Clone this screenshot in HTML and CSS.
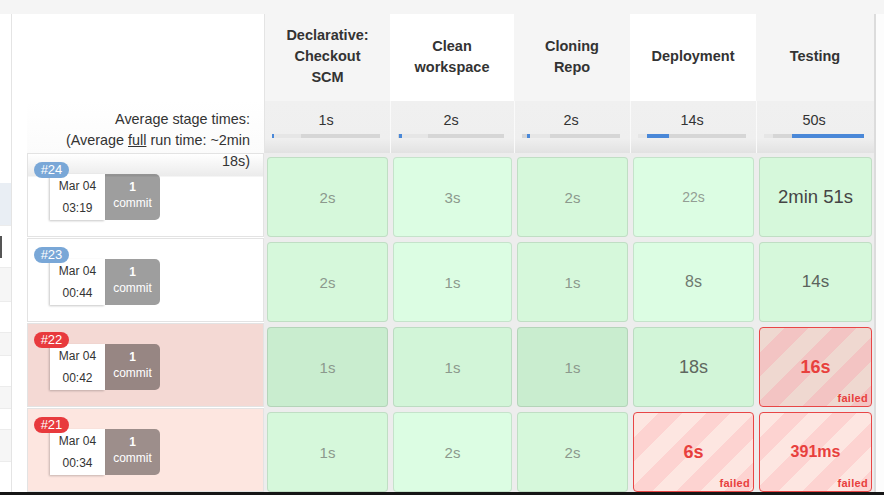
FILE: index.html
```html
<!DOCTYPE html>
<html>
<head>
<meta charset="utf-8">
<link rel="stylesheet" href="styles.css">
</head>
<body>
<div class="topbar"></div>
<div class="layout">
  <aside class="sidebar">
    <div class="side-item h169"></div>
    <div class="side-item h43 blue"></div>
    <div class="side-item h42"><div class="mark"></div></div>
    <div class="side-item h34 gray"></div>
    <div class="side-item h31"></div>
    <div class="side-item h23 gray"></div>
    <div class="side-item h31"></div>
    <div class="side-item h22 gray"></div>
    <div class="side-item h21"></div>
    <div class="side-item h32 gray"></div>
    <div class="side-item fill"></div>
  </aside>
  <main class="stage-view">
    <div class="grid">
      <div class="corner"></div>
      <div class="sh alt first">Declarative:<br>Checkout<br>SCM</div>
      <div class="sh">Clean<br>workspace</div>
      <div class="sh alt">Cloning<br>Repo</div>
      <div class="sh">Deployment</div>
      <div class="sh alt">Testing</div>

      <div class="avg-label">Average stage times:<br>(Average <u>full</u> run time: ~2min<br>18s)</div>
      <div class="avg first">1s<div class="bar"><span class="blue" style="width:2px"></span><span class="light" style="width:27px"></span></div></div>
      <div class="avg">2s<div class="bar"><span style="width:1px"></span><span class="blue" style="width:3px"></span><span class="light" style="width:26px"></span></div></div>
      <div class="avg">2s<div class="bar"><span style="width:5px"></span><span class="blue" style="width:3px"></span><span class="light" style="width:20px"></span></div></div>
      <div class="avg">14s<div class="bar"><span class="light" style="width:9px"></span><span class="blue" style="width:22px"></span></div></div>
      <div class="avg">50s<div class="bar"><span class="light" style="width:9px"></span><span style="width:19px"></span><span class="blue" style="width:72px"></span></div></div>

      <div class="build first-row">
        <span class="badge ok">#24</span>
        <div class="card"><div class="date">Mar 04<br>03:19</div><div class="commit"><b>1</b><br>commit</div></div>
      </div>
      <div class="col"><div class="cell g1 t-sm">2s</div></div>
      <div class="col"><div class="cell g2 t-sm">3s</div></div>
      <div class="col"><div class="cell g1 t-sm">2s</div></div>
      <div class="col"><div class="cell g2 t-xs">22s</div></div>
      <div class="col"><div class="cell g1 t-xl">2min 51s</div></div>

      <div class="build">
        <span class="badge ok">#23</span>
        <div class="card"><div class="date">Mar 04<br>00:44</div><div class="commit"><b>1</b><br>commit</div></div>
      </div>
      <div class="col"><div class="cell g1 t-sm">2s</div></div>
      <div class="col"><div class="cell g2 t-sm">1s</div></div>
      <div class="col"><div class="cell g1 t-sm">1s</div></div>
      <div class="col"><div class="cell g2 t-md">8s</div></div>
      <div class="col"><div class="cell g1 t-lg">14s</div></div>

      <div class="build fail-dark">
        <span class="badge bad">#22</span>
        <div class="card"><div class="date">Mar 04<br>00:42</div><div class="commit"><b>1</b><br>commit</div></div>
      </div>
      <div class="col"><div class="cell g3 t-sm">1s</div></div>
      <div class="col"><div class="cell g4 t-sm">1s</div></div>
      <div class="col"><div class="cell g3 t-sm">1s</div></div>
      <div class="col"><div class="cell g4 t-lg2">18s</div></div>
      <div class="col"><div class="cell failed dark">16s<span class="failed-tag">failed</span></div></div>

      <div class="build fail-light">
        <span class="badge bad">#21</span>
        <div class="card"><div class="date">Mar 04<br>00:34</div><div class="commit"><b>1</b><br>commit</div></div>
      </div>
      <div class="col"><div class="cell g1 t-sm">1s</div></div>
      <div class="col"><div class="cell g2 t-sm">2s</div></div>
      <div class="col"><div class="cell g1 t-sm">2s</div></div>
      <div class="col"><div class="cell failed light">6s<span class="failed-tag">failed</span></div></div>
      <div class="col"><div class="cell failed light small">391ms<span class="failed-tag">failed</span></div></div>
    </div>
  </main>
  <div class="edge"></div>
</div>
<div class="bottombar"></div>
</body>
</html>
```
FILE: styles.css
```css
* { box-sizing: border-box; }
html, body { margin: 0; padding: 0; }
body {
  width: 884px;
  height: 495px;
  overflow: hidden;
  background: #fff;
  color: #333;
  font-family: "Liberation Sans", Arial, sans-serif;
}
.topbar { height: 14px; background: #f5f5f5; }
.layout { display: flex; height: 478px; overflow: hidden; }
.bottombar { height: 3px; background: #161616; }

/* sidebar */
.sidebar {
  flex: none;
  width: 12px;
  border-right: 1px solid #e4e4e4;
  display: flex;
  flex-direction: column;
}
.side-item { flex: none; border-bottom: 1px solid #ececec; }
.side-item.blue { background: #e9eef4; }
.side-item.gray { background: #f6f6f6; }
.side-item.fill { flex: 1; border-bottom: 0; }
.h169 { height: 169px; border-bottom: 0; }
.h43 { height: 43px; }
.h42 { height: 42px; }
.h34 { height: 34px; }
.h31 { height: 31px; }
.h23 { height: 23px; }
.h22 { height: 22px; }
.h21 { height: 21px; }
.h32 { height: 32px; }
.mark { height: 22px; margin-top: 10px; border-left: 2px solid #555; }

/* stage view */
.stage-view { flex: none; padding-left: 15px; }
.grid {
  display: grid;
  grid-template-columns: 237px 126px 124px 116px 126px 118px;
  grid-template-rows: 87px 52px repeat(4, 85px);
}
.edge { flex: 1; border-left: 2px solid #dcdcdc; background: #fcfcfc; }

.sh {
  display: flex;
  align-items: center;
  justify-content: center;
  text-align: center;
  font-weight: 700;
  font-size: 14.5px;
  line-height: 21px;
  padding-bottom: 2px;
  color: #333;
  background: #fff;
}
.sh.alt { background: #f5f5f5; }
.sh.first { border-left: 1px solid #e4e4e4; }

.avg-label {
  position: relative;
  z-index: 1;
  text-align: right;
  padding: 8px 14px 0 0;
  font-size: 14.4px;
  line-height: 21px;
  color: #333;
  background: linear-gradient(#fff, #fbfbfb);
}
.avg-label u { text-decoration: underline; }

.avg {
  text-align: center;
  font-size: 14.4px;
  line-height: 21px;
  padding: 9px 10px 0 7px;
  color: #333;
  border-left: 1px solid #fafafa;
  background: linear-gradient(#f0f0f0 0, #efefef 72%, #e2e2e2 100%);
}
.avg.first { border-left: 1px solid #e4e4e4; }
.bar {
  display: flex;
  height: 4px;
  margin-top: 3px;
  background: #d6d6d6;
}
.bar span { display: block; height: 4px; flex: none; }
.bar .blue { background: #4a88d8; }
.bar .light { background: #e6e6e6; }

/* build label cells */
.build {
  height: 84px;
  border: 1px solid #e3e3e3;
  padding: 8px 0 0 6px;
  background: #fff;
}
.build.first-row { background: linear-gradient(#fff 0, #ebebeb 22px, #fff 23px); }
.build.fail-dark { background: #f4d9d4; }
.build.fail-light { background: #fde6e0; }
.badge {
  display: block;
  position: relative;
  z-index: 1;
  width: 35px;
  height: 16px;
  border-radius: 8px;
  color: #fff;
  font-size: 13px;
  line-height: 16px;
  text-align: center;
}
.badge.ok { background: #79a7d7; }
.badge.bad { background: #e83a3d; }
.card { display: flex; margin: -4px 0 0 16px; }
.date {
  width: 55px;
  height: 46px;
  background: #fff;
  box-shadow: -1px 1px 2px rgba(0, 0, 0, 0.22);
  text-align: center;
  font-size: 12px;
  line-height: 22px;
  padding-top: 1px;
  color: #333;
}
.commit {
  width: 55px;
  height: 46px;
  background: rgba(0, 0, 0, 0.38);
  color: #fff;
  border-radius: 0 5px 5px 0;
  text-align: center;
  font-size: 12px;
  line-height: 16px;
  padding-top: 5px;
}
.commit b { font-weight: 700; }

/* stage cells */
.col { background: #ededed; padding: 4px 2px 1px 3px; }
.cell {
  position: relative;
  height: 80px;
  border: 1px solid rgba(0, 0, 0, 0.1);
  border-radius: 4px;
  display: flex;
  align-items: center;
  justify-content: center;
}
.g1 { background: #d6f8db; }
.g2 { background: #dcfde3; }
.g3 { background: #c9edcf; }
.g4 { background: #d2f5d8; }
.t-xs { font-size: 14px; color: #939d94; }
.t-sm { font-size: 15px; color: #8c998d; }
.t-md { font-size: 16px; color: #6f7a70; }
.t-lg { font-size: 17px; color: #5b635c; }
.t-lg2 { font-size: 18px; color: #5f675f; }
.t-xl { font-size: 18.5px; color: #454545; }

.cell.failed {
  border: 1px solid #e84646;
  color: #e8403d;
  font-weight: 700;
  font-size: 18px;
}
.cell.failed.small { font-size: 16px; }
.cell.failed.dark {
  background: repeating-linear-gradient(135deg, #efd8d0 0, #efd8d0 17px, #f3c4c3 17px, #f3c4c3 34px);
}
.cell.failed.light {
  background: repeating-linear-gradient(135deg, #fde6e1 0, #fde6e1 17px, #fdd3d1 17px, #fdd3d1 34px);
}
.failed-tag {
  position: absolute;
  right: 3px;
  bottom: 2px;
  font-size: 11px;
  font-weight: 700;
  letter-spacing: 0.3px;
  color: #e8403d;
}
```
